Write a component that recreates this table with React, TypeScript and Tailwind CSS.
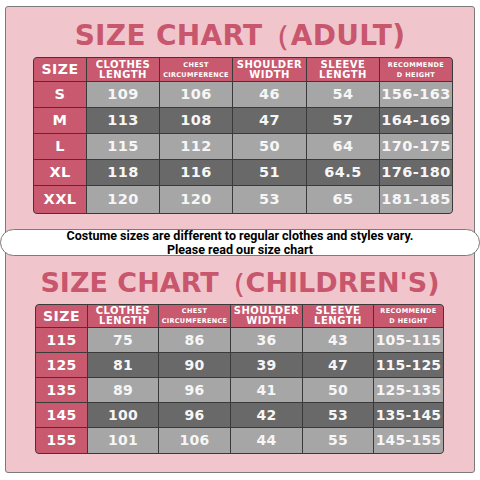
import React from "react";

type Row = { size: string; v: string[] };

const adult: Row[] = [
  { size: "S", v: ["109", "106", "46", "54", "156-163"] },
  { size: "M", v: ["113", "108", "47", "57", "164-169"] },
  { size: "L", v: ["115", "112", "50", "64", "170-175"] },
  { size: "XL", v: ["118", "116", "51", "64.5", "176-180"] },
  { size: "XXL", v: ["120", "120", "53", "65", "181-185"] },
];

const kids: Row[] = [
  { size: "115", v: ["75", "86", "36", "43", "105-115"] },
  { size: "125", v: ["81", "90", "39", "47", "115-125"] },
  { size: "135", v: ["89", "96", "41", "50", "125-135"] },
  { size: "145", v: ["100", "96", "42", "53", "135-145"] },
  { size: "155", v: ["101", "106", "44", "55", "145-155"] },
];

const font = { fontFamily: '"DejaVu Sans", Verdana, sans-serif' };

function Header() {
  const two = "flex flex-col items-center justify-center bg-[#c8596e] text-white font-bold whitespace-nowrap";
  return (
    <>
      <div className="flex items-center justify-center bg-[#c8596e] text-white font-bold text-[14px] tracking-[0.5px]">SIZE</div>
      <div className={two + " text-[10px] tracking-[0.5px] leading-[10px]"}>
        <span>CLOTHES</span>
        <span>LENGTH</span>
      </div>
      <div className={two + " text-[6.5px] tracking-[0.3px] leading-[10px]"}>
        <span>CHEST</span>
        <span>CIRCUMFERENCE</span>
      </div>
      <div className={two + " text-[10px] tracking-[0.5px] leading-[10px]"}>
        <span>SHOULDER</span>
        <span>WIDTH</span>
      </div>
      <div className={two + " text-[10px] tracking-[0.5px] leading-[10px]"}>
        <span>SLEEVE</span>
        <span>LENGTH</span>
      </div>
      <div className={two + " text-[6.5px] tracking-[0.4px] leading-[10px]"}>
        <span>RECOMMENDE</span>
        <span>D HEIGHT</span>
      </div>
    </>
  );
}

function Table({
  rows,
  cols,
  rowsTpl,
  className,
  numCls,
}: {
  rows: Row[];
  cols: string;
  rowsTpl: string;
  className: string;
  numCls: string;
}) {
  return (
    <div
      className={"grid gap-px bg-[#3a3a3a] border border-[#3a3a3a] rounded-[4px] overflow-hidden " + className}
      style={{ ...font, gridTemplateColumns: cols, gridTemplateRows: rowsTpl }}
    >
      <Header />
      {rows.map((r, i) => (
        <React.Fragment key={r.size}>
          <div className={"flex items-center justify-center bg-[#c8596e] text-white font-bold whitespace-nowrap " + numCls}>{r.size}</div>
          {r.v.map((x, j) => (
            <div
              key={j}
              className={
                "flex items-center justify-center text-[#f6f6f6] font-bold whitespace-nowrap " +
                numCls +
                " " +
                (i % 2 === 0 ? "bg-[#a6a6a6]" : "bg-[#696969]")
              }
            >
              {x}
            </div>
          ))}
        </React.Fragment>
      ))}
    </div>
  );
}

export default function App() {
  return (
    <div className="w-[480px] h-[480px] bg-white pt-[6px] pl-[5px]">
      <div className="w-[470px] h-[467px] bg-[#f1c5cc] border border-[#7a7a7a] rounded-[3px] flex flex-col">
        <div
          className="mt-[15px] text-center text-[#c8566c] font-bold text-[28px] leading-[28px] tracking-[0.3px] whitespace-nowrap"
          style={font}
        >
          SIZE CHART（ADULT)
        </div>
        <Table
          rows={adult}
          cols="52px 72px 72px 73px 72px 72px"
          rowsTpl="23px 25px 25px 25px 25px 27px"
          className="mt-[7px] ml-[27px] w-[420px]"
          numCls="text-[14.5px] tracking-[0.4px]"
        />
        <div
          className="mt-[15px] -mx-[6px] h-[27px] bg-white border border-[#7a7a7a] rounded-full flex flex-col items-center justify-center text-black font-bold text-[12.5px] leading-[14px]"
          style={{ fontFamily: 'Roboto, "Noto Sans", sans-serif' }}
        >
          <span>Costume sizes are different to regular clothes and styles vary.</span>
          <span>Please read our size chart</span>
        </div>
        <div
          className="mt-[13px] text-center text-[#c8566c] font-bold text-[27px] leading-[27px] tracking-[0px] whitespace-nowrap"
          style={font}
        >
          SIZE CHART（CHILDREN'S)
        </div>
        <Table
          rows={kids}
          cols="51px 70px 71px 71px 70px 69px"
          rowsTpl="22px 24px 24px 24px 24px 25px"
          className="mt-[8px] ml-[29px] w-[409px]"
          numCls="text-[14px] tracking-[0.2px]"
        />
      </div>
    </div>
  );
}
